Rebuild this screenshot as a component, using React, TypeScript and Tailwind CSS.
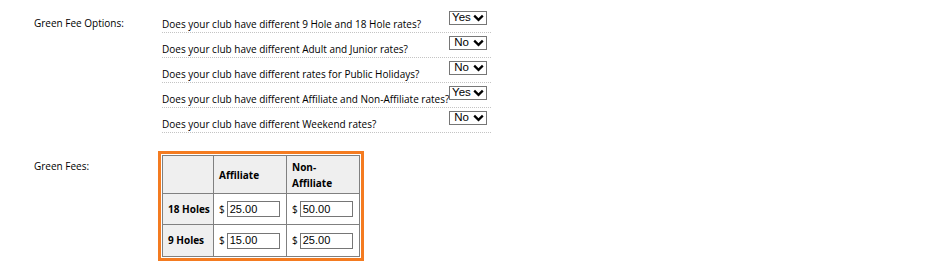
import React from "react";

const questions: { q: string; v: string }[] = [
  { q: "Does your club have different 9 Hole and 18 Hole rates?", v: "Yes" },
  { q: "Does your club have different Adult and Junior rates?", v: "No" },
  { q: "Does your club have different rates for Public Holidays?", v: "No" },
  { q: "Does your club have different Affiliate and Non-Affiliate rates?", v: "Yes" },
  { q: "Does your club have different Weekend rates?", v: "No" },
];

function FakeSelect({ value }: { value: string }) {
  return (
    <div className="mt-[3px] mr-[4px] flex h-[14px] w-[38px] shrink-0 items-center border border-[#767676] bg-white">
      <span className="w-[23px] text-center font-['Liberation_Sans',Arial,sans-serif] text-[11.5px] leading-none text-black">
        {value}
      </span>
      <svg width="11" height="8" viewBox="0 0 11 8">
        <path d="M1.2 1.6 L5.5 5.8 L9.8 1.6" fill="none" stroke="#000" strokeWidth="2.3" />
      </svg>
    </div>
  );
}

function Money({ value }: { value: string }) {
  return (
    <div className="flex items-center">
      <span className="mr-[2px]">$</span>
      <div className="flex h-[16px] w-[53px] items-center border border-[#767676] bg-white px-[2px] font-['Liberation_Sans',Arial,sans-serif] text-[11px] leading-none text-black">
        {value}
      </div>
    </div>
  );
}

export default function App() {
  return (
    <div className="h-[268px] w-[925px] bg-white font-['Open_Sans',sans-serif] text-[10px] text-black">
      <div className="flex pl-[34px] pt-[8px]">
        <div className="w-[128px] pt-[7px] leading-[16px]">Green Fee Options:</div>
        <div className="w-[329px]">
          {questions.map((r, i) => (
            <div key={i} className="flex h-[25px] border-b border-dotted border-[#c4c4c4]">
              <div className="min-w-0 flex-1 whitespace-nowrap pt-[8px] leading-[16px]">{r.q}</div>
              <FakeSelect value={r.v} />
            </div>
          ))}
        </div>
      </div>

      <div className="mt-[18px] flex pl-[34px]">
        <div className="w-[124px] pt-[7px] leading-[16px]">Green Fees:</div>
        <div className="border-[3px] border-[#f47b20] p-[1px]">
          <table className="w-[198px] table-fixed border-collapse border border-[#808080] font-bold">
            <tbody>
              <tr className="h-[38px]">
                <td className="w-[51px] border border-[#808080] bg-[#efefef]"></td>
                <td className="w-[73px] border border-[#808080] bg-[#efefef] pl-[5px] leading-[16px]">Affiliate</td>
                <td className="w-[73px] border border-[#808080] bg-[#efefef] pl-[5px] leading-[16px]">
                  Non-
                  <br />
                  Affiliate
                </td>
              </tr>
              <tr className="h-[31px]">
                <td className="border border-[#808080] bg-[#efefef] pl-[5px] whitespace-nowrap">18 Holes</td>
                <td className="border border-[#808080] pl-[5px] font-normal">
                  <Money value="25.00" />
                </td>
                <td className="border border-[#808080] pl-[5px] font-normal">
                  <Money value="50.00" />
                </td>
              </tr>
              <tr className="h-[32px]">
                <td className="border border-[#808080] bg-[#efefef] pl-[5px] whitespace-nowrap">9 Holes</td>
                <td className="border border-[#808080] pl-[5px] font-normal">
                  <Money value="15.00" />
                </td>
                <td className="border border-[#808080] pl-[5px] font-normal">
                  <Money value="25.00" />
                </td>
              </tr>
            </tbody>
          </table>
        </div>
      </div>
    </div>
  );
}
